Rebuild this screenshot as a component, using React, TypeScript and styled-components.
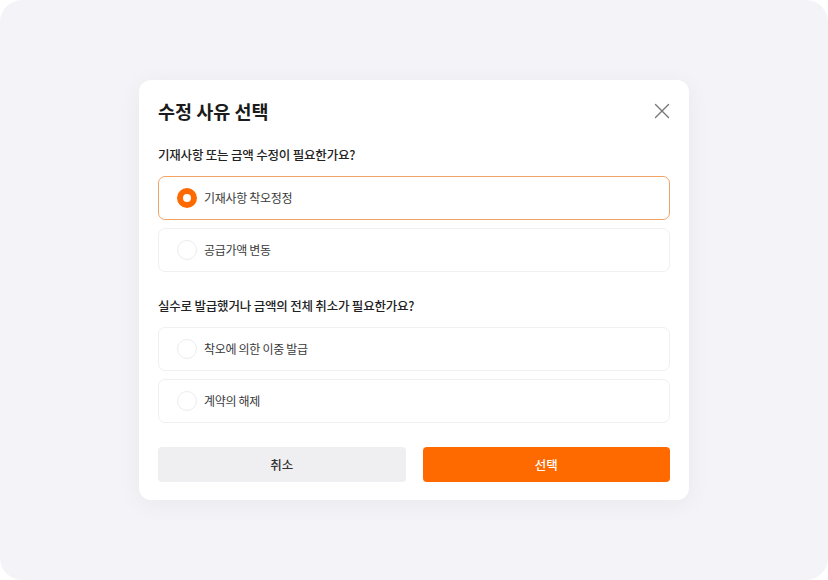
import { useState } from "react";
import styled, { createGlobalStyle } from "styled-components";

const GlobalStyle = createGlobalStyle`
  html, body {
    margin: 0;
    padding: 0;
    background: #ffffff;
  }
  * {
    box-sizing: border-box;
  }
  body {
    font-family: "Noto Sans CJK KR", "Noto Sans", sans-serif;
  }
`;

const Page = styled.div`
  width: 828px;
  height: 580px;
  border-radius: 22px;
  background-color: #f4f4f8;
  padding-top: 80px;
  display: flex;
  justify-content: center;
  align-items: flex-start;
`;

const Modal = styled.div`
  width: 550px;
  background-color: #ffffff;
  border-radius: 12px;
  padding: 20px 19px 18px;
  box-shadow: 0 4px 24px rgba(20, 20, 40, 0.05);
`;

const Header = styled.div`
  display: flex;
  justify-content: space-between;
  align-items: center;
  height: 22px;
`;

const Title = styled.h2`
  margin: 0;
  font-size: 18.5px;
  line-height: 22px;
  font-weight: 700;
  color: #1b1b1b;
`;

const CloseButton = styled.button`
  border: 0;
  padding: 0;
  margin-right: -1px;
  background: transparent;
  width: 18px;
  height: 18px;
  display: flex;
  align-items: center;
  justify-content: center;
  color: #777;
`;

const Question = styled.p<{ first?: boolean }>`
  margin: ${(props) => (props.first ? "23px" : "24px")} 0 11px;
  font-size: 12.5px;
  letter-spacing: -0.2px;
  line-height: 20px;
  font-weight: 500;
  color: #222;
`;

const OptionList = styled.div`
  display: flex;
  flex-direction: column;
  gap: 8px;
`;

const Option = styled.label<{ selected: boolean }>`
  display: flex;
  align-items: center;
  gap: 7px;
  height: 44px;
  padding: 0 18px;
  border-radius: 7px;
  border: 1px solid ${(props) => (props.selected ? "#f2a466" : "#f0f0f2")};
  background-color: #fff;
  cursor: pointer;
`;

const Radio = styled.span<{ selected: boolean }>`
  width: 20px;
  height: 20px;
  border-radius: 50%;
  flex-shrink: 0;
  border: ${(props) => (props.selected ? "6.5px solid #ff6a00" : "1px solid #ececee")};
  background-color: #fff;
`;

const Label = styled.span`
  font-size: 12px;
  letter-spacing: -0.3px;
  color: #3a3a3a;
  line-height: 20px;
`;

const Footer = styled.div`
  display: grid;
  grid-template-columns: 1fr 1fr;
  gap: 17px;
  margin-top: 24px;
`;

const Button = styled.button<{ primary?: boolean }>`
  height: 35px;
  border: 0;
  border-radius: 4px;
  font-family: inherit;
  font-size: 12.5px;
  font-weight: 500;
  background-color: ${(props) => (props.primary ? "#ff6a00" : "#efeff1")};
  color: ${(props) => (props.primary ? "#fff" : "#333")};
`;

const groups = [
  {
    question: "기재사항 또는 금액 수정이 필요한가요?",
    options: ["기재사항 착오정정", "공급가액 변동"],
  },
  {
    question: "실수로 발급했거나 금액의 전체 취소가 필요한가요?",
    options: ["착오에 의한 이중 발급", "계약의 해제"],
  },
];

export default function App() {
  const [selected, setSelected] = useState("기재사항 착오정정");

  return (
    <>
      <GlobalStyle />
      <Page>
        <Modal>
          <Header>
            <Title>수정 사유 선택</Title>
            <CloseButton aria-label="닫기">
              <svg width="16" height="16" viewBox="0 0 16 16" fill="none">
                <path d="M1.5 1.5l13 13M14.5 1.5l-13 13" stroke="currentColor" strokeWidth="1.4" strokeLinecap="round" />
              </svg>
            </CloseButton>
          </Header>
          {groups.map((group, i) => (
            <div key={group.question}>
              <Question first={i === 0}>{group.question}</Question>
              <OptionList>
                {group.options.map((opt) => (
                  <Option key={opt} selected={selected === opt} onClick={() => setSelected(opt)}>
                    <Radio selected={selected === opt} />
                    <Label>{opt}</Label>
                  </Option>
                ))}
              </OptionList>
            </div>
          ))}
          <Footer>
            <Button>취소</Button>
            <Button primary>선택</Button>
          </Footer>
        </Modal>
      </Page>
    </>
  );
}
